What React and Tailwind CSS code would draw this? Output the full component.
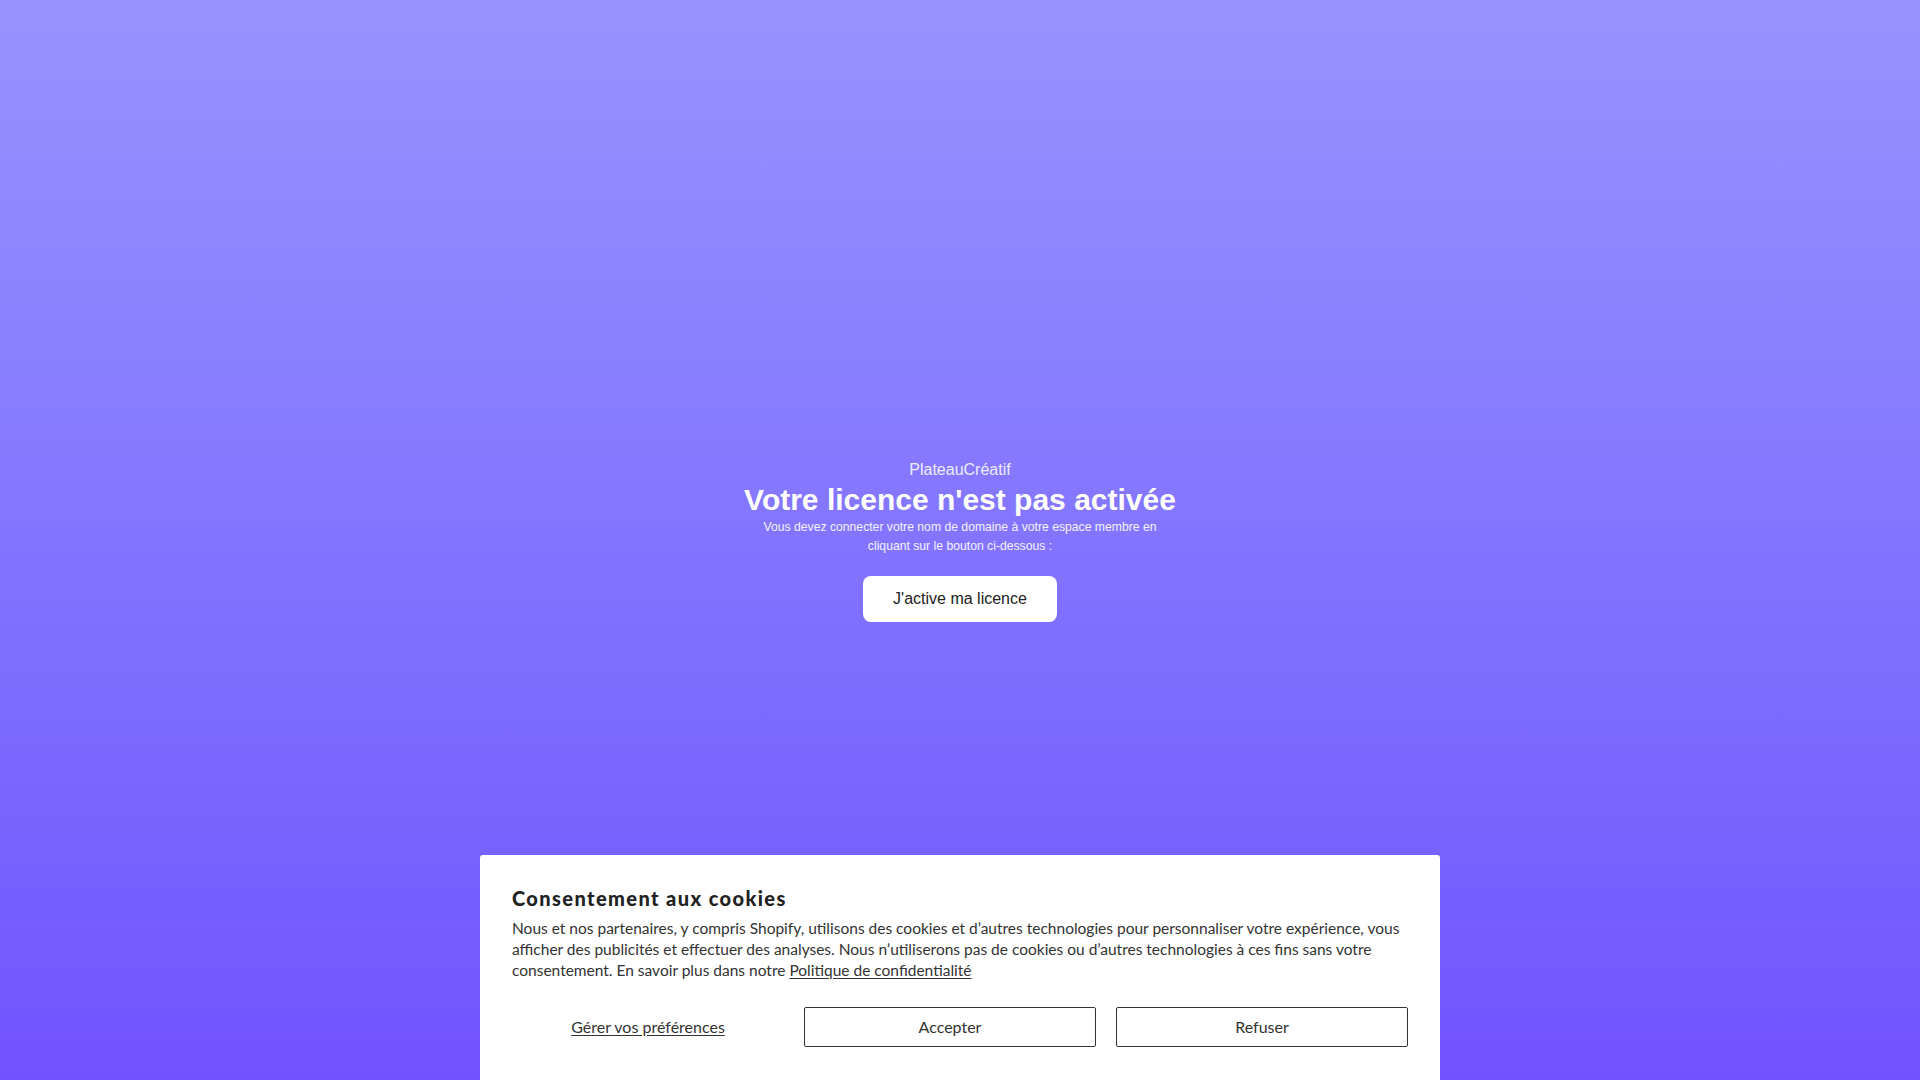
import { useState } from 'react';

// Page "licence non activée" + bandeau de consentement cookies (Shopify).

export default function App() {
  const [showBanner, setShowBanner] = useState(true);

  return (
    <div className="relative min-h-screen w-full bg-gradient-to-b from-[#9892ff] to-[#7152ff] font-['Liberation_Sans',Arial,sans-serif]">
      <main className="flex min-h-screen flex-col items-center justify-center text-center text-white">
        <p className="text-[16px] leading-[24px] text-white/85">PlateauCréatif</p>
        <h1 className="mt-[1px] text-[30px] font-bold leading-[34px]">Votre licence n'est pas activée</h1>
        <p className="mt-[1px] text-[12.2px] leading-[19px] text-white/90">
          Vous devez connecter votre nom de domaine à votre espace membre en
          <br />
          cliquant sur le bouton ci-dessous :
        </p>
        <a
          href="#"
          className="mt-[20px] flex h-[46px] w-[194px] items-center justify-center rounded-[8px] bg-white text-[16px] text-[#222]"
        >
          J'active ma licence
        </a>
      </main>

      {showBanner && (
        <CookieBanner onClose={() => setShowBanner(false)} />
      )}
    </div>
  );
}

function CookieBanner({ onClose }) {
  return (
    <div className="fixed bottom-0 left-1/2 w-[960px] -translate-x-1/2 rounded-t-[3px] bg-white px-[32px] pb-[33px] pt-[31px] font-['Lato','Noto_Sans',sans-serif] text-[#333]">
      <h2 className="text-[20px] font-black leading-[24px] tracking-[1.4px] text-[#222]">Consentement aux cookies</h2>
      <p className="mt-[8px] text-[15.5px] leading-[21px]">
        Nous et nos partenaires, y compris Shopify, utilisons des cookies et d’autres technologies pour personnaliser votre expérience, vous
        <br />
        afficher des publicités et effectuer des analyses. Nous n’utiliserons pas de cookies ou d’autres technologies à ces fins sans votre
        <br />
        consentement. En savoir plus dans notre{' '}
        <a href="#" className="underline underline-offset-2">Politique de confidentialité</a>
      </p>
      <div className="mt-[26px] grid grid-cols-[272px_292px_292px] gap-[20px] text-[16px]">
        <button type="button" className="h-[40px] underline underline-offset-2">
          Gérer vos préférences
        </button>
        <button type="button" onClick={onClose} className="h-[40px] rounded-[2px] border border-[#333]">
          Accepter
        </button>
        <button type="button" onClick={onClose} className="h-[40px] rounded-[2px] border border-[#333]">
          Refuser
        </button>
      </div>
    </div>
  );
}
